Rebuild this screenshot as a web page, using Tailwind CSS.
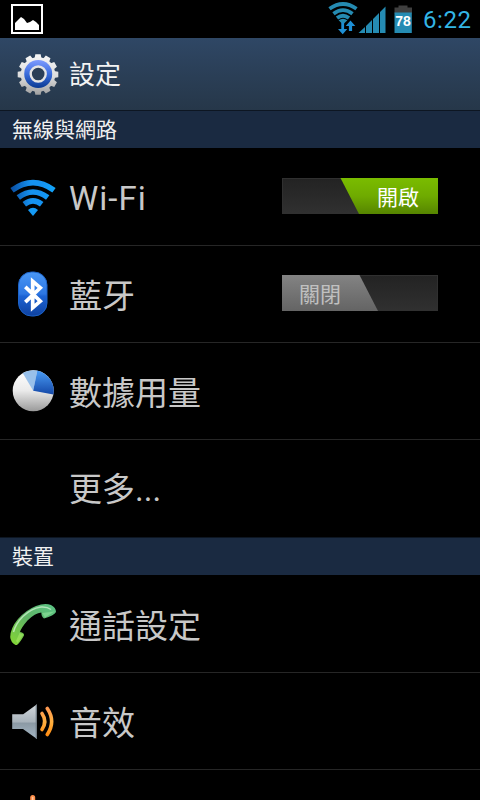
<!DOCTYPE html>
<html lang="zh-Hant">
<head>
  <meta charset="UTF-8">
  <meta name="viewport" content="width=device-width, initial-scale=1.0">
  <title>設定</title>
  <script src="https://cdn.jsdelivr.net/npm/@tailwindcss/browser@4"></script>
</head>
<body class="bg-black font-[Roboto,'Noto_Sans_CJK_TC',sans-serif] text-[#c8c8c8]">
  <div class="w-[480px] h-[800px] overflow-hidden flex flex-col">
    <!-- Status bar -->
    <div class="h-[38px] shrink-0 flex items-center justify-between pl-[11px] pr-[10px]">
      <svg class="w-8 h-[30px]" viewBox="0 0 32 30">
        <rect x="1" y="1" width="30" height="28" fill="none" stroke="#fff" stroke-width="2"/>
        <path d="M4 26v-7l2-2 4-4 3 2 3 4 3-1 3-2 3 2 3 3v5z" fill="#fff"/>
      </svg>
      <div class="flex items-center h-full">
        <svg class="w-[88px] h-[38px]" viewBox="0 0 88 38">
          <g fill="none" stroke="#258bb2" stroke-width="3.8">
            <path d="M1.500 8.800Q15 -.8 28.500 8.800"/>
            <path d="M5.500 13.700Q15 6.500 24.500 13.700"/>
            <path d="M9 18Q15 13.500 21 18"/>
          </g>
          <path d="M10.600 20.300Q15 17.300 19.400 20.300L15 24.500z" fill="#258bb2"/>
          <path d="M13.300 22.500h2.800v6.500h3.200L14.700 34.300 10 29h3.300z" fill="#1e8fd5"/>
          <path d="M22.500 20.500L27.300 26h-3.200v5h-3.200v-5h-3.200z" fill="#1e8fd5"/>
          <path d="M30.500 33L37 27v6zM38 33v-7l6-6V33zM45 33V19l6-6V33zM52 33V12l5.500-5.500V33z" fill="#258bb2"/>
          <path d="M66.500 8.500v-1h4v-2h9v2h4.500v6h-17.500z" fill="#3f3f3f"/>
          <rect x="66.500" y="12.500" width="17.300" height="20.500" fill="#258bb2"/>
          <text x="75.100" y="26" font-family="Liberation Sans, sans-serif" font-size="14" font-weight="700" fill="#fff" text-anchor="middle">78</text>
        </svg>
        <span class="ml-[7px] mt-[2px] w-[47px] text-[24px] leading-[38px] tracking-[0.6px] whitespace-nowrap text-[#33b5e5]">6:22</span>
      </div>
    </div>

    <!-- Action bar -->
    <div class="h-[72px] shrink-0 flex items-center pl-4 bg-linear-to-b from-[#2f4765] to-[#263749]">
      <svg class="w-11 h-11" viewBox="0 0 44 44">
        <defs>
          <linearGradient id="metal" x1="0" y1="0" x2="0" y2="1">
            <stop offset="0" stop-color="#f8f8f8"/>
            <stop offset=".55" stop-color="#dcdcdc"/>
            <stop offset="1" stop-color="#9c9c9c"/>
          </linearGradient>
          <linearGradient id="gearBlue" x1="0" y1="0" x2="0" y2="1">
            <stop offset="0" stop-color="#7f9cff"/>
            <stop offset=".5" stop-color="#3a6cdb"/>
            <stop offset="1" stop-color="#0a3a92"/>
          </linearGradient>
          <mask id="teeth">
            <circle cx="22" cy="22.500" r="17.300" fill="#fff"/>
            <g fill="#fff">
              <path id="t" d="M18.300 8l1-5.800h5.400l1 5.800z"/>
              <use href="#t" transform="rotate(30 22 22.500)"/>
              <use href="#t" transform="rotate(60 22 22.500)"/>
              <use href="#t" transform="rotate(90 22 22.500)"/>
              <use href="#t" transform="rotate(120 22 22.500)"/>
              <use href="#t" transform="rotate(150 22 22.500)"/>
              <use href="#t" transform="rotate(180 22 22.500)"/>
              <use href="#t" transform="rotate(210 22 22.500)"/>
              <use href="#t" transform="rotate(240 22 22.500)"/>
              <use href="#t" transform="rotate(270 22 22.500)"/>
              <use href="#t" transform="rotate(300 22 22.500)"/>
              <use href="#t" transform="rotate(330 22 22.500)"/>
            </g>
          </mask>
        </defs>
        <rect y="1" width="44" height="43" fill="url(#metal)" mask="url(#teeth)"/>
        <circle cx="22.200" cy="22" r="14" fill="url(#gearBlue)"/>
        <circle cx="22.200" cy="22" r="7.500" fill="#2b3f57" stroke="#e4e4e4" stroke-width="2.400"/>
      </svg>
      <h1 class="ml-[9px] mt-[2px] text-[26px] leading-[36px] text-[#f3f3f3]">設定</h1>
    </div>

    <h2 class="h-[38px] shrink-0 border-t border-[#0d1622] bg-[#1a2a41] pl-3 text-[21px] leading-[38px] text-[#f0f0f0]">無線與網路</h2>

    <!-- Wi-Fi -->
    <div class="h-[98px] shrink-0 flex items-center border-b border-[#262626] pl-[9px]">
      <svg class="mt-[3px] w-12 h-12" viewBox="0 0 48 48">
        <defs>
          <linearGradient id="wifi" gradientUnits="userSpaceOnUse" x1="2" y1="0" x2="46" y2="0">
            <stop offset="0" stop-color="#0a4ea2"/>
            <stop offset=".45" stop-color="#1592f0"/>
            <stop offset=".7" stop-color="#1592f0"/>
            <stop offset="1" stop-color="#12a5fa"/>
          </linearGradient>
        </defs>
        <g fill="none" stroke="url(#wifi)" stroke-width="5.600">
          <path d="M3 16.200Q24 1 45 16.200"/>
          <path d="M9.300 23.500Q24 12.500 38.700 23.500"/>
          <path d="M15.300 30.300Q24 23.500 32.700 30.300"/>
        </g>
        <path d="M19 36Q24 31.500 29 36L24 42z" fill="#159af5"/>
      </svg>
      <span class="ml-3 mt-[5px] w-[213px] text-[33px] leading-[48px] tracking-[1px]">Wi-Fi</span>
      <div class="relative mb-[2px] flex h-9 w-[156px] items-center justify-end border border-[#303030] bg-linear-to-b from-[#232323] to-[#303030]">
        <svg class="absolute -top-px -right-px h-9 w-[98px]" viewBox="0 0 98 36">
          <defs>
            <linearGradient id="on" x1="0" y1="0" x2="0" y2="1">
              <stop offset="0" stop-color="#7abc00"/>
              <stop offset=".5" stop-color="#6fab00"/>
              <stop offset="1" stop-color="#568500"/>
            </linearGradient>
          </defs>
          <path d="M.5 0H98v36H19z" fill="url(#on)"/>
        </svg>
        <span class="relative mr-[18px] mt-[5px] text-[21px] leading-9 text-white">開啟</span>
      </div>
    </div>

    <!-- Bluetooth -->
    <div class="h-[97px] shrink-0 flex items-center border-b border-[#262626] pl-[9px]">
      <svg class="w-12 h-12" viewBox="0 0 48 48">
        <defs>
          <linearGradient id="bt" x1="0" y1="0" x2="0" y2="1">
            <stop offset="0" stop-color="#4a97f5"/>
            <stop offset=".5" stop-color="#2c76e2"/>
            <stop offset=".55" stop-color="#1c63d4"/>
            <stop offset="1" stop-color="#0e419f"/>
          </linearGradient>
        </defs>
        <rect x="9.500" y="2" width="28.500" height="44" rx="13" fill="url(#bt)" stroke="#1c63c8" stroke-width="1"/>
        <path d="M16.300 16.800L31.300 31.200 23.700 37.800V11.200L31.300 17.800 16.300 32.200" fill="none" stroke="#fff" stroke-width="3.700"/>
      </svg>
      <span class="ml-3 mt-[5px] w-[213px] text-[33px] leading-[48px]">藍牙</span>
      <div class="relative mb-[3px] flex h-9 w-[156px] items-center border border-[#303030] bg-linear-to-b from-[#232323] to-[#303030]">
        <svg class="absolute -top-px -left-px h-9 w-[98px]" viewBox="0 0 98 36">
          <defs>
            <linearGradient id="off" x1="0" y1="0" x2="0" y2="1">
              <stop offset="0" stop-color="#838383"/>
              <stop offset="1" stop-color="#646464"/>
            </linearGradient>
          </defs>
          <path d="M0 0h77.500L96 36H0z" fill="url(#off)"/>
        </svg>
        <span class="relative ml-4 mt-[5px] text-[21px] leading-9 text-[#c0c0c0]">關閉</span>
      </div>
    </div>

    <!-- Data usage -->
    <div class="h-[97px] shrink-0 flex items-center border-b border-[#262626] pl-[9px]">
      <svg class="w-12 h-12" viewBox="0 0 48 48">
        <defs>
          <linearGradient id="pie" x1="0" y1="0" x2="0" y2="1">
            <stop offset="0" stop-color="#fff"/>
            <stop offset=".5" stop-color="#eaeaea"/>
            <stop offset="1" stop-color="#9a9a9a"/>
          </linearGradient>
          <linearGradient id="slice" x1="0" y1="0" x2="0" y2="1">
            <stop offset="0" stop-color="#4a9cf5"/>
            <stop offset="1" stop-color="#1448a8"/>
          </linearGradient>
        </defs>
        <circle cx="24.200" cy="23.700" r="20.500" fill="url(#pie)"/>
        <path d="M24.200 23.700L13.700 6.100A20.500 20.500 0 0 1 28.300 3.600z" fill="#98c0ea"/>
        <path d="M24.200 23.700L28.300 3.600A20.500 20.500 0 0 1 44.400 27.500z" fill="url(#slice)"/>
      </svg>
      <span class="ml-3 mt-[5px] text-[33px] leading-[48px]">數據用量</span>
    </div>

    <!-- More -->
    <div class="h-[97px] shrink-0 flex items-center pl-[69px]">
      <span class="mt-[3px] text-[33px] leading-[48px]">更多...</span>
    </div>

    <h2 class="h-[38px] shrink-0 border-t border-[#0d1622] bg-[#1a2a41] pl-3 text-[21px] leading-[38px] text-[#f0f0f0]">裝置</h2>

    <!-- Call settings -->
    <div class="h-[98px] shrink-0 flex items-center border-b border-[#262626] pl-[9px]">
      <svg class="w-12 h-12" viewBox="0 0 48 48">
        <defs>
          <linearGradient id="phone" x1="1" y1="0" x2="0" y2="1">
            <stop offset="0" stop-color="#5cc487"/>
            <stop offset=".5" stop-color="#5fb365"/>
            <stop offset="1" stop-color="#86d832"/>
          </linearGradient>
        </defs>
        <path d="M6.500 45Q1.500 42 1.200 37Q1.500 28 9 19Q17 10 27 6Q36 2.500 42 5Q47 7.500 47 12Q45 15.500 35 18.500Q32.500 17 32.300 12.500Q26 13 18.500 20.500Q12 28 11 32Q15.500 32.500 15 35.500Q11 42.500 8.500 44.500Q7.500 45.300 6.500 45z" fill="url(#phone)"/>
        <path d="M4.500 32C7 22 18 9 32 7Q38 6.500 42 9.500" fill="none" stroke="#d0f2d0" stroke-opacity=".75" stroke-width="1.500"/>
        <path d="M7 41L10.500 33L14.500 34.500L8.500 43z" fill="#b6f26c" fill-opacity=".45"/>
        <path d="M33 13L45.500 11.500L36 17.500z" fill="#a0f0a8" fill-opacity=".45"/>
      </svg>
      <span class="ml-3 mt-[6px] text-[33px] leading-[48px]">通話設定</span>
    </div>

    <!-- Sound -->
    <div class="h-[97px] shrink-0 flex items-center border-b border-[#262626] pl-[9px]">
      <svg class="mt-[2px] w-12 h-12" viewBox="0 0 48 48">
        <defs>
          <linearGradient id="speaker" x1="0" y1="0" x2="0" y2="1">
            <stop offset="0" stop-color="#d3d9de"/>
            <stop offset=".5" stop-color="#a9b3bb"/>
            <stop offset=".55" stop-color="#8c9aa5"/>
            <stop offset="1" stop-color="#a5b7c5"/>
          </linearGradient>
          <linearGradient id="wave" gradientUnits="userSpaceOnUse" x1="0" y1="10" x2="0" y2="38">
            <stop offset="0" stop-color="#ff9a52"/>
            <stop offset=".5" stop-color="#ffb040"/>
            <stop offset="1" stop-color="#ff8a10"/>
          </linearGradient>
        </defs>
        <path d="M3.200 16.300h11L28 6.300V41L14 31H3.200z" fill="url(#speaker)"/>
        <path d="M27.300 7V40.500" stroke="#6d7880" stroke-width="1.200"/>
        <path d="M33 15.500Q38.500 23.500 33 31.500" fill="none" stroke="url(#wave)" stroke-width="3.600" stroke-linecap="round"/>
        <path d="M38.300 10.500Q47 23.500 38.300 36.500" fill="none" stroke="url(#wave)" stroke-width="3.600" stroke-linecap="round"/>
      </svg>
      <span class="ml-3 mt-[5px] text-[33px] leading-[48px]">音效</span>
    </div>

    <!-- Display -->
    <div class="h-[97px] shrink-0 flex items-start border-b border-[#262626] pl-[9px] pt-6">
      <svg class="w-12 h-12" viewBox="0 0 48 48">
        <path d="M23.700 3.500V10" stroke="#ff8f4a" stroke-width="5" stroke-linecap="round"/>
        <path d="M23.700 3.500V10" stroke="#ffc9a0" stroke-width="1.500" stroke-linecap="round"/>
      </svg>
    </div>
  </div>
</body>
</html>
